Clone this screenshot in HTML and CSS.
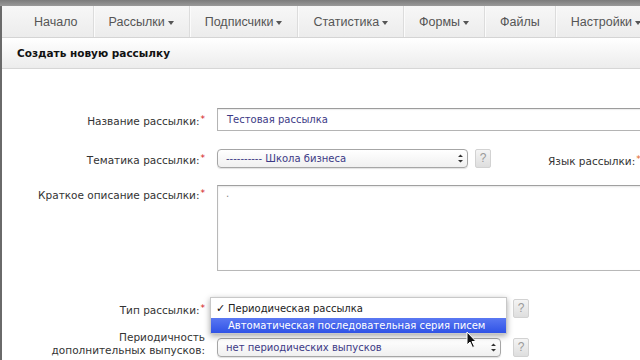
FILE: index.html
```html
<!DOCTYPE html>
<html lang="ru">
<head>
    <meta charset="UTF-8">
    <meta name="viewport" content="width=device-width, initial-scale=1.0">
    <title>Создать новую рассылку</title>
    <link rel="stylesheet" href="styles.css">
</head>
<body>
    <div class="chrome"></div>
    <div class="page">
        <!-- Top menu -->
        <nav class="menu">
            <div class="menu-item">Начало</div>
            <div class="menu-item">Рассылки<span class="caret"></span></div>
            <div class="menu-item">Подписчики<span class="caret"></span></div>
            <div class="menu-item">Статистика<span class="caret"></span></div>
            <div class="menu-item">Формы<span class="caret"></span></div>
            <div class="menu-item">Файлы</div>
            <div class="menu-item last">Настройки<span class="caret"></span></div>
        </nav>

        <div class="subhead">Создать новую рассылку</div>

        <!-- Form -->
        <div class="form">
            <div class="row row-name">
                <div class="label">Название рассылки:<span class="req">*</span></div>
                <div class="field">
                    <div class="input">Тестовая рассылка</div>
                </div>
            </div>

            <div class="row row-theme">
                <div class="label">Тематика рассылки:<span class="req">*</span></div>
                <div class="field">
                    <div class="select wide">
                        <span class="select-text">---------- Школа бизнеса</span>
                        <span class="select-arrows">
                            <svg width="7" height="11" viewBox="0 0 7 11"><path d="M1 4 L3.5 1.5 L6 4 Z M1 7 L3.5 9.5 L6 7 Z" fill="#333"/></svg>
                        </span>
                    </div>
                    <div class="help">?</div>
                    <div class="label side">Язык рассылки:<span class="req orange">*</span></div>
                </div>
            </div>

            <div class="row row-desc">
                <div class="label">Краткое описание рассылки:<span class="req">*</span></div>
                <div class="field">
                    <div class="textarea">.</div>
                </div>
            </div>

            <div class="row row-type">
                <div class="label">Тип рассылки:<span class="req">*</span></div>
                <div class="field">
                    <div class="select long">
                        <span class="select-text">Периодическая рассылка</span>
                        <span class="select-arrows">
                            <svg width="7" height="11" viewBox="0 0 7 11"><path d="M1 4 L3.5 1.5 L6 4 Z M1 7 L3.5 9.5 L6 7 Z" fill="#333"/></svg>
                        </span>
                        <!-- open dropdown -->
                        <div class="dropdown">
                            <div class="option"><span class="check">✓</span>Периодическая рассылка</div>
                            <div class="option selected">Автоматическая последовательная серия писем</div>
                        </div>
                    </div>
                    <div class="help">?</div>
                </div>
            </div>

            <div class="row row-period">
                <div class="label">Периодичность<br>дополнительных выпусков:</div>
                <div class="field">
                    <div class="select long">
                        <span class="select-text">нет периодических выпусков</span>
                        <span class="select-arrows">
                            <svg width="7" height="11" viewBox="0 0 7 11"><path d="M1 4 L3.5 1.5 L6 4 Z M1 7 L3.5 9.5 L6 7 Z" fill="#333"/></svg>
                        </span>
                        <svg class="cursor" width="12" height="18" viewBox="0 0 12 18">
                            <path d="M1 1 L1 14 L4 11 L6.5 16.5 L8.5 15.5 L6 10.5 L10 10.5 Z" fill="#111" stroke="#fff" stroke-width="1"/>
                        </svg>
                    </div>
                    <div class="help">?</div>
                </div>
            </div>
        </div>
    </div>
</body>
</html>
```

FILE: styles.css
```css
* {
    box-sizing: border-box;
}

body {
    margin: 0;
    padding: 0;
    background-color: #fff;
    font-family: "DejaVu Sans", sans-serif;
    color: #333;
    width: 640px;
    height: 360px;
    overflow: hidden;
}

/* Browser edge */
.chrome {
    height: 6px;
    background: linear-gradient(to bottom, #7c7c7c, #9a9a9a);
}

.page {
    border-left: 2px solid #6a6a6a;
    height: 354px;
    overflow: hidden;
}

/* Top menu */
.menu {
    display: flex;
    height: 32px;
    padding-left: 17px;
    background: linear-gradient(to bottom, #f7f7f7, #ececec);
    border-bottom: 1px solid #d4d4d4;
    font-family: "Liberation Sans", Arial, sans-serif;
    font-size: 12.5px;
    color: #555;
    white-space: nowrap;
}

.menu-item {
    display: flex;
    align-items: center;
    padding: 0 15px;
    border-right: 1px solid #dcdcdc;
    box-shadow: 1px 0 0 #fbfbfb;
}

.menu-item.last {
    border-right: none;
    box-shadow: none;
}

.caret {
    display: inline-block;
    margin-left: 3px;
    margin-top: 2px;
    border-left: 3px solid transparent;
    border-right: 3px solid transparent;
    border-top: 4px solid #555;
}

/* Subheader */
.subhead {
    height: 31px;
    line-height: 30px;
    padding-left: 15px;
    background: linear-gradient(to bottom, #ffffff, #ececec);
    border-bottom: 1px solid #d6d6d6;
    font-size: 10.5px;
    font-weight: bold;
    color: #111;
}

/* Form */
.form {
    padding-top: 39px;
}

.row {
    display: grid;
    grid-template-columns: 203px 1fr;
    column-gap: 12px;
}

.label {
    text-align: right;
    font-size: 10.5px;
    line-height: 13px;
    color: #333;
    white-space: nowrap;
}

.req {
    color: #d2161a;
    font-size: 9px;
    vertical-align: 3px;
    margin-left: 1px;
}

.req.orange {
    color: #e0662a;
}

.field {
    display: flex;
    align-items: center;
}

.row-name .label { padding-top: 5px; }
.row-theme { margin-top: 18px; }
.row-theme .label { padding-top: 3px; }
.row-desc { margin-top: 17px; }
.row-desc .label { padding-top: 2px; }
.row-type { margin-top: 28px; }
.row-type .label { padding-top: 3px; }
.row-period { margin-top: 20px; }
.row-period .label { margin-top: -7px; }

.input {
    width: 440px;
    height: 23px;
    line-height: 21px;
    padding-left: 9px;
    border: 1px solid #b4b4b4;
    border-top-color: #9c9c9c;
    box-shadow: inset 0 1px 1px rgba(0, 0, 0, 0.08);
    font-size: 10px;
    color: #3c3a86;
    flex-shrink: 0;
}

.textarea {
    width: 440px;
    height: 86px;
    padding: 2px 8px;
    border: 1px solid #b8b8b8;
    border-top-color: #a0a0a0;
    box-shadow: inset 0 1px 2px rgba(0, 0, 0, 0.1);
    font-size: 10px;
    color: #888;
    flex-shrink: 0;
}

/* Mac-like select */
.select {
    position: relative;
    display: flex;
    align-items: center;
    height: 19px;
    border: 1px solid #a6a6a6;
    border-radius: 4px;
    background: linear-gradient(to bottom, #ffffff, #f0f0f0);
    box-shadow: 0 1px 1px rgba(0, 0, 0, 0.12);
    font-size: 10px;
    color: #3c3a86;
    flex-shrink: 0;
}

.select.wide {
    width: 251px;
}

.select.long {
    width: 284px;
}

.select-text {
    flex: 1;
    padding-left: 8px;
    white-space: nowrap;
    overflow: hidden;
}

.select-arrows {
    display: flex;
    align-items: center;
    justify-content: center;
    width: 14px;
    height: 100%;
}

.help {
    width: 16px;
    height: 19px;
    margin-left: 7px;
    border: 1px solid #d2d2d2;
    border-radius: 2px;
    background: linear-gradient(to bottom, #f4f4f4, #dedede);
    text-align: center;
    line-height: 17px;
    font-family: "Liberation Sans", Arial, sans-serif;
    font-size: 12px;
    color: #9a9a9a;
    flex-shrink: 0;
}

.row-type .help,
.row-period .help {
    margin-left: 12px;
}

.label.side {
    margin-left: 57px;
    padding-top: 4px;
    text-align: left;
}

/* Open dropdown menu */
.dropdown {
    position: absolute;
    left: -8px;
    top: -3px;
    width: 297px;
    padding: 3px 0 0;
    background: #fff;
    box-shadow: 0 2px 6px rgba(0, 0, 0, 0.35);
    border: 1px solid #c8c8c8;
    font-size: 10px;
    color: #222;
    z-index: 2;
}

.option {
    height: 15px;
    line-height: 15px;
    padding-left: 17px;
    position: relative;
    white-space: nowrap;
}

.option:first-child {
    height: 17px;
    line-height: 16px;
}

.check {
    position: absolute;
    left: 5px;
    top: 0;
    font-size: 11px;
    color: #111;
}

.option.selected {
    background: linear-gradient(to bottom, #5a78f2, #2f52e6);
    color: #fff;
}

.cursor {
    position: absolute;
    left: 248px;
    top: -8px;
    z-index: 3;
}
```
